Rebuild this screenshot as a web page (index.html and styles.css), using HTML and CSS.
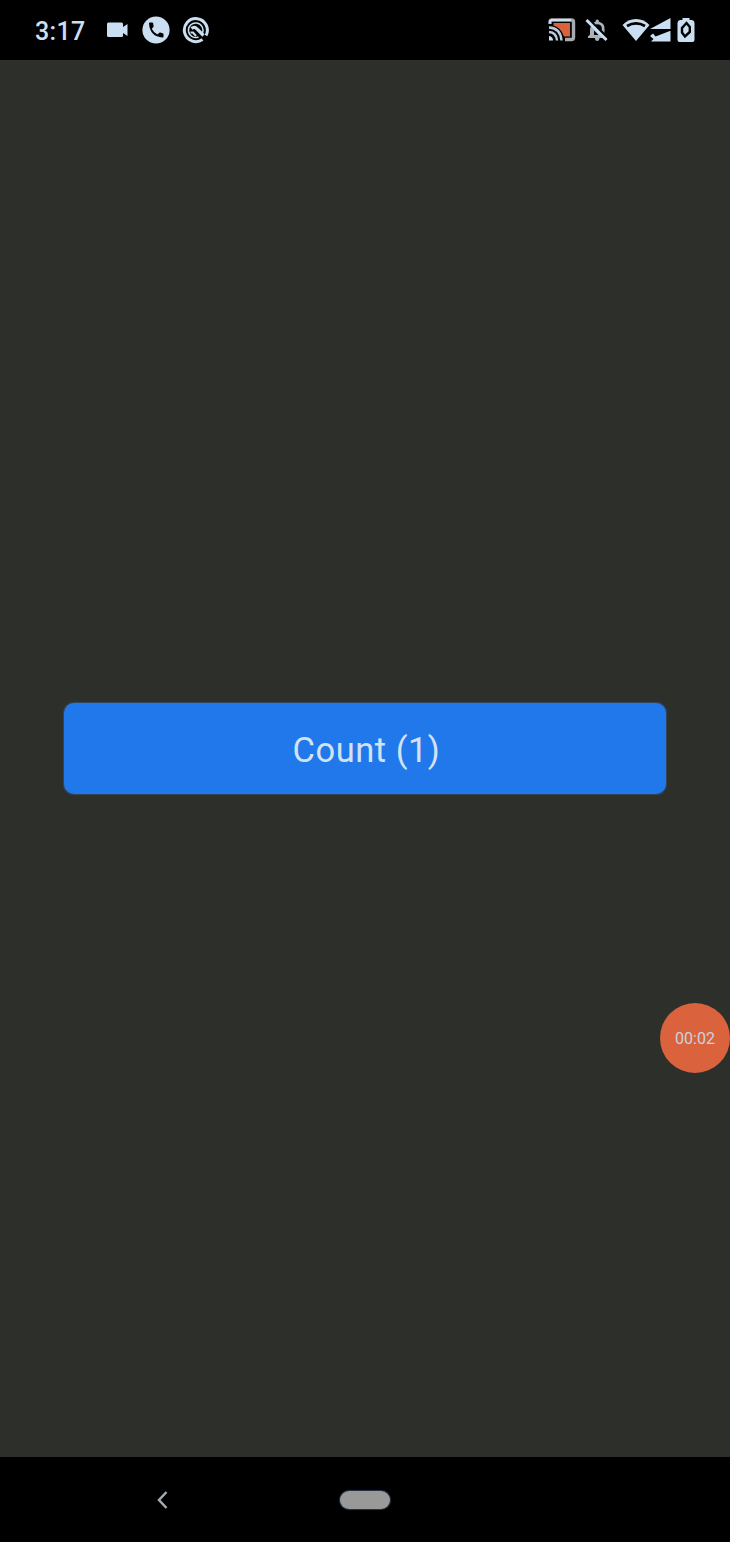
FILE: index.html
```html
<!DOCTYPE html>
<html lang="en">
<head>
<meta charset="utf-8">
<title>Counter</title>
<link rel="stylesheet" href="styles.css">
</head>
<body>
<div class="screen">
  <header class="status">
    <div class="group">
      <span class="clock">3:17</span>
      <svg class="video" width="22" height="16" viewBox="0 0 22 16"><path fill="#cbdff2" d="M1.500 0.500H14.500Q16 .5 16 2V5L20.500 2V14L16 11V13.500Q16 15 14.500 15H1.500Q0 15 0 13.500V2Q0 .5 1.500 .5Z"/></svg>
      <svg class="phone" width="28" height="28" viewBox="0 0 28 28"><circle cx="14" cy="14" r="13.600" fill="#cbdff2"/><path fill="#000" d="M7 7.600Q7 6.600 8 6.600H10.200Q11.100 6.600 11.200 7.500L11.600 10.200Q11.700 10.900 11.200 11.300L9.700 12.700Q11.700 16.500 15.400 18.400L17 16.900Q17.500 16.400 18.200 16.600L20.700 17.200Q21.500 17.400 21.500 18.300V20.600Q21.500 21.700 20.500 21.600Q8 20.800 7 7.600Z"/></svg>
      <svg class="ring" width="28" height="28" viewBox="0 0 28 28" fill="none" stroke="#cbdff2"><path stroke-width="3" d="M24 19.500A11.500 11.500 0 1 0 20.500 23.500"/><path stroke-width="1.500" d="M20.500 17A7.300 7.300 0 1 0 16.500 21"/><path stroke-width="3.200" d="M9.500 12.500Q12.500 10 15 13L21.500 19.500"/><path stroke-width="2" d="M8.500 16.500H11L14 20"/></svg>
    </div>
    <div class="group">
      <svg class="cast" width="28" height="24" viewBox="0 0 28 24" fill="none"><path fill="#da633e" d="M5.500 5H22V18.500H16Q13 9.500 5.500 7.500Z"/><path stroke="#a6aaae" stroke-width="3.400" d="M2 6V4Q2 2 4 2H23.500Q25.500 2 25.500 4V19.500Q25.500 21.500 23.500 21.500H17"/><path stroke="#cbdff2" stroke-width="2" d="M2 5.500V4Q2 2 4 2H23"/><path stroke="#b9cbdc" stroke-width="2.500" d="M1 9.500Q12.500 10 13.500 22.500M1 14Q8.500 14.500 9 22.500"/><path fill="#cbdff2" d="M1 18Q5 18.500 5 22.500H1Z"/></svg>
      <svg class="bell" width="24" height="24" viewBox="0 0 24 24"><path fill="#a9b4bf" d="M6.800 7.500L19.500 20H3V18.500L5 16.500V11.500Q5 9 6.800 7.500ZM8.700 4.500L10.500 3.700Q10.500 1.500 12.300 1.500Q14 1.500 14 3.700Q19.500 5 19.500 10.500V14.800L16.800 12.200V10Q16.500 6.400 12.200 6.200L10.800 6.500ZM9.800 20H14.600Q14.200 23 12.200 23Q10.200 23 9.800 20Z"/><path fill="#000" d="M9 12.500L13.500 17H9Z"/><path stroke="#cbdff2" stroke-width="3" d="M1.500 2L21.500 22"/></svg>
      <svg class="wifi" width="28" height="24" viewBox="0 0 28 24"><path fill="#cbdff2" d="M.5 7Q6 1 14 1T27.500 7L14 23Z"/><path fill="none" stroke="#000" stroke-width="2.600" d="M5 8Q14 2.800 23 8"/></svg>
      <svg class="signal" width="22" height="24" viewBox="0 0 22 24"><path fill="#cbdff2" d="M21.500 0V11H1ZM21.500 12.800V23.500H2L4.500 21L1 18L4 15.500L6.500 18.500Z"/></svg>
      <svg class="battery" width="18" height="26" viewBox="0 0 18 26"><path fill="#cbdff2" d="M5.500 1H12.500V3H15Q17.500 3.500 17.500 6V23Q17.500 25 15.500 25H2.500Q.5 25 .5 23V6Q.5 3.500 3 3H5.500Z"/><path fill="none" stroke="#000" stroke-width="2.400" d="M9.500 6L5 11V15.500L8 19.500L12.800 15V10Z"/></svg>
    </div>
  </header>
  <main class="content">
    <button class="count">Count (1)</button>
    <div class="timer">00:02</div>
  </main>
  <nav class="nav">
    <svg class="back" width="12" height="20" viewBox="0 0 12 20"><path fill="none" stroke="#a4abb3" stroke-width="2.500" d="M9.500 2L2 10L9.500 18"/></svg>
    <span class="home"></span>
  </nav>
</div>
</body>
</html>
```
FILE: styles.css
```css
* { box-sizing: border-box; }
body { margin: 0; background: #000; font-family: Roboto, sans-serif; }
.screen { display: flex; flex-direction: column; width: 730px; height: 1542px; }
.status { display: flex; justify-content: space-between; align-items: center; height: 60px; padding: 0 35px; background: #000; }
.group { display: flex; align-items: center; }
.group svg { display: block; flex: none; }
.clock { width: 72px; font-size: 25px; line-height: 30px; font-weight: 500; letter-spacing: .3px; color: #cbdff2; padding-top: 3px; }
.phone { margin-left: 13px; }
.ring { margin-left: 12px; }
.bell { margin-left: 9px; }
.wifi { margin-left: 13px; }
.signal { margin-left: -1px; }
.battery { margin-left: 6px; }
.content { position: relative; display: flex; flex-direction: column; align-items: center; height: 1397px; padding-top: 643px; background: #2d2f2b; }
.count { width: 602px; height: 91px; margin: 0; padding: 3px 0 0 3px; border: 0; border-radius: 10px; background: #2178ea; box-shadow: 0 0 1px 1px #34485c; color: #d1e2f3; font: 400 34.5px/40px Roboto, sans-serif; letter-spacing: .5px; }
.timer { position: absolute; right: 0; top: 943px; width: 70px; height: 70px; border-radius: 50%; background: #da633e; color: #c7d4df; font-size: 16px; line-height: 72px; text-align: center; }
.nav { display: flex; align-items: center; height: 85px; padding-left: 157px; background: #000; }
.home { width: 50px; height: 18px; margin-left: 171px; border-radius: 9px; background: #999; box-shadow: 0 0 1px 1px #26384a; }
```
